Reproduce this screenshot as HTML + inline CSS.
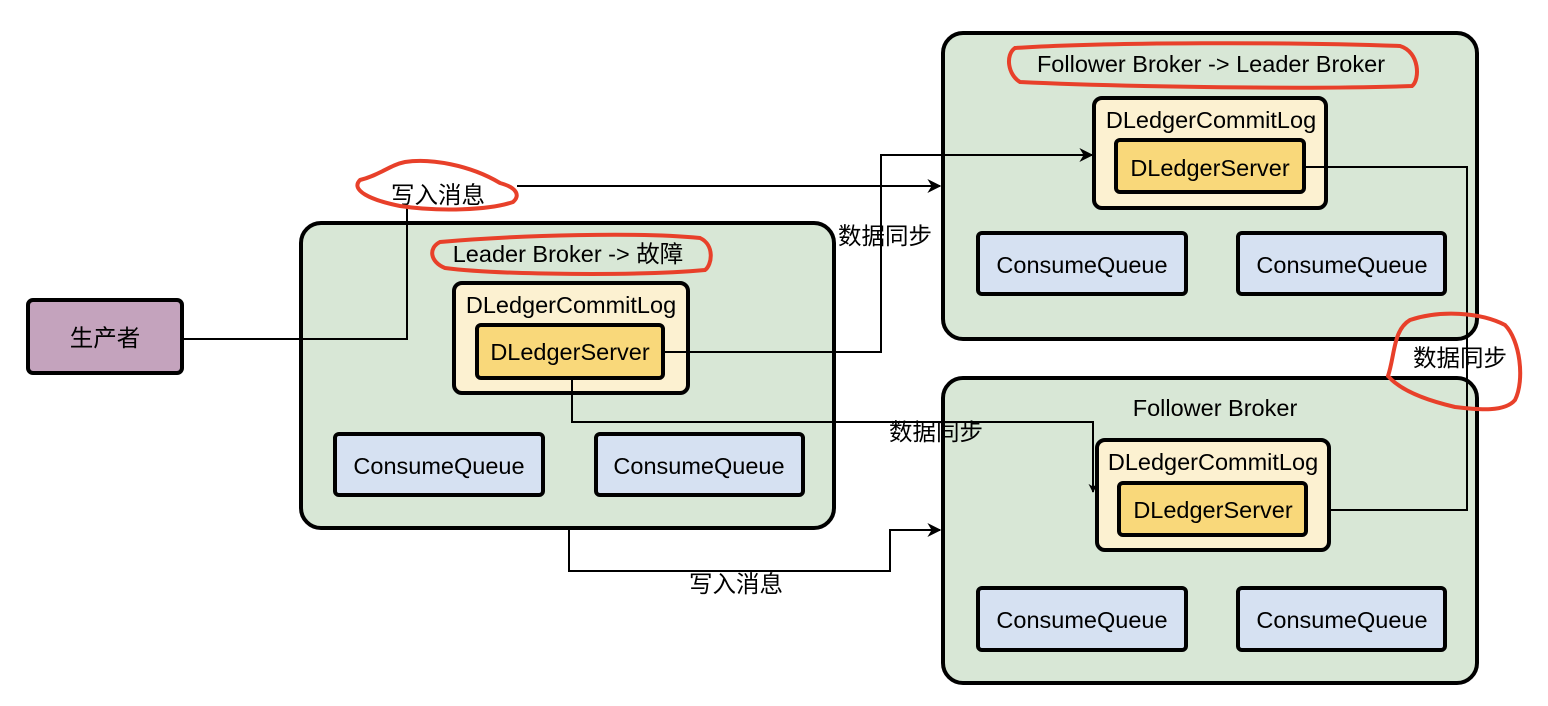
<!DOCTYPE html>
<html><head><meta charset="utf-8"><style>
html,body{margin:0;padding:0;background:#fff;width:1548px;height:706px;overflow:hidden}
text{font-family:"Liberation Sans","Noto Sans CJK SC",sans-serif;fill:#000}
</style></head><body>
<svg width="1548" height="706" viewBox="0 0 1548 706" xmlns="http://www.w3.org/2000/svg">
<defs><marker id="a" viewBox="0 0 10 10" refX="9" refY="5" markerWidth="9" markerHeight="9" markerUnits="userSpaceOnUse" orient="auto"><path d="M0,0 L10,5 L0,10 L3,5 Z" fill="#000"/></marker>
<marker id="b" viewBox="0 0 10 10" refX="9" refY="5" markerWidth="16" markerHeight="14" markerUnits="userSpaceOnUse" orient="auto"><path d="M0,0 L10,5 L0,10 L3,5 Z" fill="#000"/></marker></defs>
<g stroke="#000" stroke-width="4">
<rect x="28" y="300" width="154" height="73" rx="5" fill="#c4a3bd"/>
<rect x="301" y="223" width="533" height="305" rx="20" fill="#d8e7d6"/>
<rect x="943" y="33" width="534" height="306" rx="20" fill="#d8e7d6"/>
<rect x="943" y="378" width="534" height="305" rx="20" fill="#d8e7d6"/>
<rect x="454" y="283" width="234" height="110" rx="8" fill="#fcf1d1"/>
<rect x="477" y="325" width="186" height="53" rx="4" fill="#f9d87a"/>
<rect x="1094" y="98" width="232" height="110" rx="8" fill="#fcf1d1"/>
<rect x="1116" y="140" width="188" height="52" rx="4" fill="#f9d87a"/>
<rect x="1097" y="440" width="232" height="110" rx="8" fill="#fcf1d1"/>
<rect x="1119" y="483" width="187" height="52" rx="4" fill="#f9d87a"/>
<g fill="#d6e1f2">
<rect x="335" y="434" width="208" height="61" rx="4"/>
<rect x="596" y="434" width="207" height="61" rx="4"/>
<rect x="978" y="233" width="208" height="61" rx="4"/>
<rect x="1238" y="233" width="207" height="61" rx="4"/>
<rect x="978" y="588" width="208" height="62" rx="4"/>
<rect x="1238" y="588" width="207" height="62" rx="4"/>
</g></g>
<g stroke="#000" stroke-width="2" fill="none">
<path d="M183,339 H407 V205"/>
<path d="M517,186 H940" marker-end="url(#b)"/>
<path d="M664,352 H881 V155 H1092" marker-end="url(#b)"/>
<path d="M572,379 V422 H1093 V492" marker-end="url(#a)"/>
<path d="M569,529 V571 H890 V530 H940" marker-end="url(#b)"/>
<path d="M1305,167 H1467 V510 H1330"/>
</g>
<g font-size="23.5" text-anchor="middle">
<text x="105" y="346">生产者</text>
<text x="568" y="262">Leader Broker -&gt; 故障</text>
<text x="571" y="313">DLedgerCommitLog</text>
<text x="570" y="360">DLedgerServer</text>
<text x="439" y="474">ConsumeQueue</text>
<text x="699" y="474">ConsumeQueue</text>
<text x="1211" y="72">Follower Broker -&gt; Leader Broker</text>
<text x="1211" y="128">DLedgerCommitLog</text>
<text x="1210" y="176">DLedgerServer</text>
<text x="1082" y="273">ConsumeQueue</text>
<text x="1342" y="273">ConsumeQueue</text>
<text x="1215" y="416">Follower Broker</text>
<text x="1213" y="470">DLedgerCommitLog</text>
<text x="1213" y="518">DLedgerServer</text>
<text x="1082" y="628">ConsumeQueue</text>
<text x="1342" y="628">ConsumeQueue</text>
<text x="438" y="203">写入消息</text>
<text x="736" y="592">写入消息</text>
<text x="885" y="244">数据同步</text>
<text x="936" y="440">数据同步</text>
<text x="1460" y="366">数据同步</text>
</g>
<g stroke="#e8402a" stroke-width="4" fill="none" stroke-linecap="round">
<path d="M500,183 C470,165 430,158 405,162 C390,165 380,175 360,180 C350,190 370,200 400,206 C440,212 490,210 513,202 C520,196 518,188 500,183 Z"/>
<path d="M440,242 C520,235 640,232 700,238 C715,245 712,265 705,270 C640,276 500,275 445,268 C430,262 428,248 440,242 Z"/>
<path d="M1015,48 C1100,42 1300,42 1400,46 C1420,52 1420,80 1412,86 C1300,90 1100,86 1020,82 C1008,75 1005,55 1015,48 Z"/>
<path d="M1388,376 C1395,355 1393,330 1410,320 C1440,310 1480,312 1505,325 C1520,340 1525,380 1515,400 C1505,412 1480,410 1455,407 C1425,400 1400,390 1388,376"/>
</g>
</svg>
</body></html>
